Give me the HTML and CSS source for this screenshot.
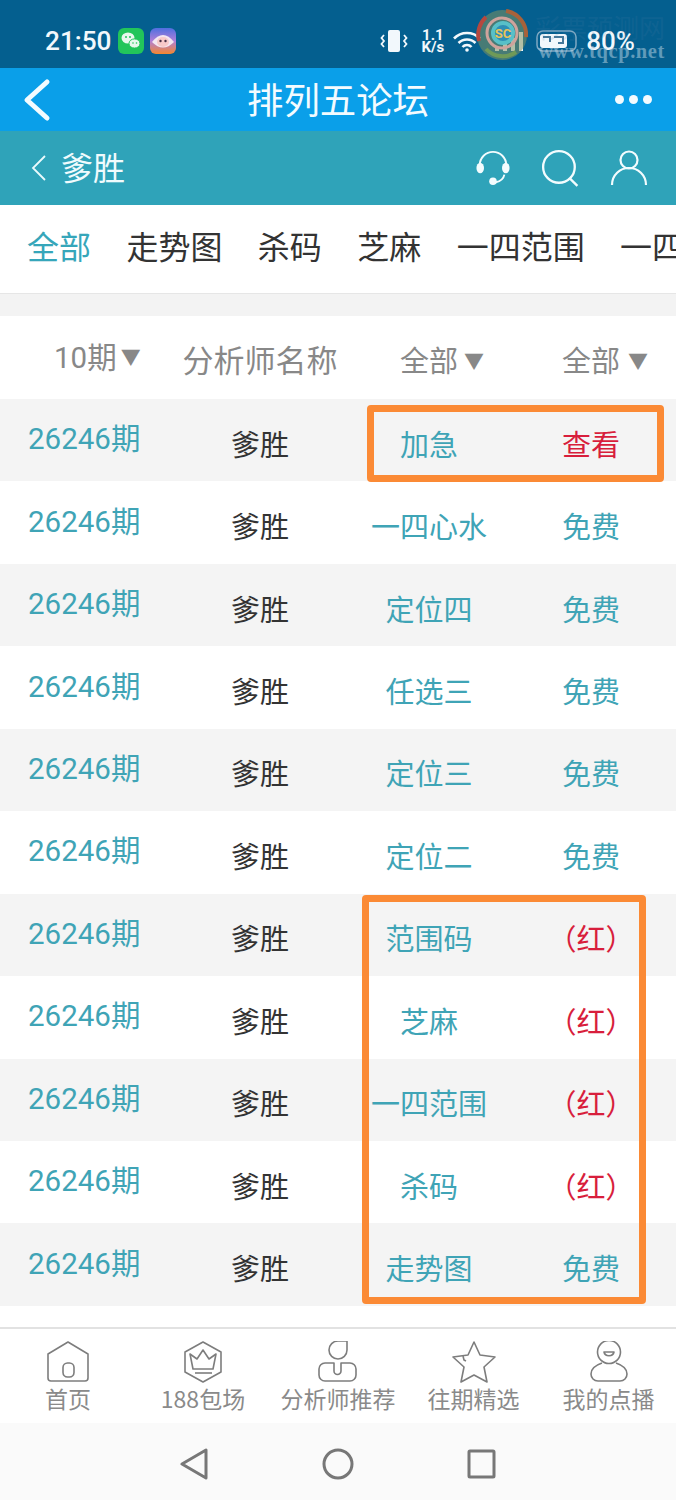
FILE: index.html
```html
<!DOCTYPE html>
<html lang="zh-CN">

<head>
  <meta charset="UTF-8">
  <meta name="viewport" content="width=device-width, initial-scale=1.0">
  <title>排列五论坛</title>
  <link rel="stylesheet" href="styles.css">
</head>

<body>
  <div class="page">
    <div class="status-bar">
      <div class="status-left">
        <span class="clock">21:50</span>
        <svg class="app-icon" viewBox="0 0 26 26">
          <rect width="26" height="26" rx="6" fill="#22c55a" />
          <ellipse cx="10" cy="10" rx="6.500" ry="5.500" fill="#e8f8ee" />
          <ellipse cx="16.500" cy="15.500" rx="5.500" ry="4.600" fill="#e8f8ee" stroke="#22c55a" />
          <circle cx="8" cy="9" r="1" fill="#22c55a" />
          <circle cx="12" cy="9" r="1" fill="#22c55a" />
          <circle cx="15" cy="15" r=".8" fill="#22c55a" />
          <circle cx="18.500" cy="15" r=".8" fill="#22c55a" />
        </svg>
        <svg class="app-icon" viewBox="0 0 26 26">
          <defs>
            <linearGradient id="appGrad" x1="0" y1="0" x2="0" y2="1">
              <stop offset="0" stop-color="#4f6fe0" />
              <stop offset=".5" stop-color="#b07fd8" />
              <stop offset="1" stop-color="#f3872f" />
            </linearGradient>
          </defs>
          <rect width="26" height="26" rx="6" fill="url(#appGrad)" />
          <path d="M2 14Q13 0 24 14Q13 25 2 14z" fill="#f4e6f0" />
          <ellipse cx="13" cy="14" rx="6" ry="5" fill="#f7c9c9" />
          <circle cx="10.500" cy="13" r="1.200" fill="#4a2f45" />
          <circle cx="15.500" cy="13" r="1.200" fill="#4a2f45" />
        </svg>
      </div>
      <div class="status-right">
        <svg class="vibrate" viewBox="0 0 30 24">
          <rect x="9" y="1" width="12" height="22" rx="2" fill="#f2f8fc" />
          <path d="M5 6L2.500 9 5 12 2.500 15 5 18M25 6l2.500 3-2.500 3 2.500 3-2.500 3" fill="none" stroke="#f2f8fc" stroke-width="1.800" />
        </svg>
        <span class="speed"><b>1.1</b><b>K/s</b></span>
        <svg class="wifi" viewBox="0 0 30 22">
          <path d="M2 8.500a18 18 0 0 1 26 0M6.500 13a12 12 0 0 1 17 0M10.500 17a6 6 0 0 1 9 0" fill="none" stroke="#f2f8fc" stroke-width="2.600" />
          <circle cx="15" cy="20" r="1.800" fill="#f2f8fc" />
        </svg>
        <svg class="signal" viewBox="0 0 32 22">
          <path d="M3 21v-4M11 21v-8M19 21v-13M27 21v-19" stroke="#f2f8fc" stroke-width="4" />
        </svg>
        <svg class="battery" viewBox="0 0 41 22">
          <rect x="1" y="1" width="39" height="20" rx="6" fill="none" stroke="#7fa9c3" stroke-width="1.500" />
          <rect x="4" y="4" width="27" height="14" rx="3" fill="#f2f8fc" />
          <path d="M7 7h7v5M18 7h9v6h-5" fill="none" stroke="#44789a" stroke-width="2" />
        </svg>
        <span class="battery-pct">80%</span>
      </div>
      <svg class="wm-logo" viewBox="0 0 52 52">
        <circle cx="26" cy="26" r="25" fill="#7f9160" opacity=".55" />
        <path d="M30 2a24 24 0 0 1 20 26" class="wm-ring wm-brown" />
        <path d="M10 8a24 24 0 0 0-7 24" class="wm-ring wm-red" />
        <path d="M10 40a23 23 0 0 0 30 3" class="wm-ring wm-green" />
        <circle cx="26" cy="24" r="15" class="wm-ring wm-pink" />
        <circle cx="27" cy="24" r="10" class="wm-ring wm-blue" />
        <text x="27" y="29" class="wm-logo-text">SC</text>
      </svg>
      <div class="wm-text">
        <span class="wm-title">彩票预测网</span>
        <span class="wm-url">www.tqcp.net</span>
      </div>
    </div>

    <div class="title-bar">
      <svg class="back-big" viewBox="0 0 30 44">
        <path d="M26 4L6 22l20 18" fill="none" stroke="#f3fbff" stroke-width="5" stroke-linecap="round" stroke-linejoin="round" />
      </svg>
      <h1 class="title">排列五论坛</h1>
      <div class="dots"><i></i><i></i><i></i></div>
    </div>

    <div class="user-bar">
      <svg class="back-small" viewBox="0 0 18 30">
        <path d="M15 3L3 15l12 12" fill="none" stroke="#eafafd" stroke-width="1.800" />
      </svg>
      <span class="user-name">爹胜</span>
      <div class="user-icons">
        <svg class="user-icon headset" viewBox="0 0 38 38">
          <path d="M5 20v-4a14 14 0 0 1 28 0v4" fill="none" stroke="#f3fcfe" stroke-width="2" />
          <path d="M31 26c-1 5-4 7-9 8" fill="none" stroke="#f3fcfe" stroke-width="2" />
          <ellipse cx="5.500" cy="19" rx="4" ry="5.500" fill="#f3fcfe" />
          <ellipse cx="32.500" cy="19" rx="4" ry="5.500" fill="#f3fcfe" />
          <circle cx="19" cy="33" r="4" fill="#f3fcfe" />
        </svg>
        <svg class="user-icon" viewBox="0 0 36 36">
          <circle cx="17" cy="17" r="15" fill="none" stroke="#f3fcfe" stroke-width="2.200" />
          <path d="M27.500 28l7 7" fill="none" stroke="#f3fcfe" stroke-width="2.200" />
        </svg>
        <svg class="user-icon" viewBox="0 0 38 38">
          <circle cx="19" cy="11" r="8.500" fill="none" stroke="#f3fcfe" stroke-width="2.200" />
          <path d="M2 36c0-10 8-17 17-17s17 7 17 17" fill="none" stroke="#f3fcfe" stroke-width="2.200" />
        </svg>
      </div>
    </div>

    <div class="tabs">
      <span class="tab tab-active">全部</span>
      <span class="tab">走势图</span>
      <span class="tab">杀码</span>
      <span class="tab">芝麻</span>
      <span class="tab">一四范围</span>
      <span class="tab">一四心水</span>
    </div>

    <div class="gap"></div>

    <div class="table">
      <div class="row row-head">
        <span class="cell-period">10期<em class="arrow arrow-period">▼</em></span>
        <span class="head-name">分析师名称</span>
        <span>全部<em class="arrow">▼</em></span>
        <span>全部<em class="arrow arrow-last">▼</em></span>
      </div>
      <div class="row odd"><span class="cell-period link">26246期</span><span class="name">爹胜</span><span class="link">加急</span><span class="red">查看</span></div>
      <div class="row"><span class="cell-period link">26246期</span><span class="name">爹胜</span><span class="link">一四心水</span><span class="link">免费</span></div>
      <div class="row odd"><span class="cell-period link">26246期</span><span class="name">爹胜</span><span class="link">定位四</span><span class="link">免费</span></div>
      <div class="row"><span class="cell-period link">26246期</span><span class="name">爹胜</span><span class="link">任选三</span><span class="link">免费</span></div>
      <div class="row odd"><span class="cell-period link">26246期</span><span class="name">爹胜</span><span class="link">定位三</span><span class="link">免费</span></div>
      <div class="row"><span class="cell-period link">26246期</span><span class="name">爹胜</span><span class="link">定位二</span><span class="link">免费</span></div>
      <div class="row odd"><span class="cell-period link">26246期</span><span class="name">爹胜</span><span class="link">范围码</span><span class="red">（红）</span></div>
      <div class="row"><span class="cell-period link">26246期</span><span class="name">爹胜</span><span class="link">芝麻</span><span class="red">（红）</span></div>
      <div class="row odd"><span class="cell-period link">26246期</span><span class="name">爹胜</span><span class="link">一四范围</span><span class="red">（红）</span></div>
      <div class="row"><span class="cell-period link">26246期</span><span class="name">爹胜</span><span class="link">杀码</span><span class="red">（红）</span></div>
      <div class="row odd"><span class="cell-period link">26246期</span><span class="name">爹胜</span><span class="link">走势图</span><span class="link">免费</span></div>
    </div>

    <div class="mark mark-top"></div>
    <div class="mark mark-bottom"></div>

    <div class="spacer"></div>

    <div class="bottom-tabs">
      <div class="bottom-tab">
        <svg class="bottom-icon" viewBox="0 0 44 42">
          <path d="M2 13L22 1l20 12v24a3 3 0 0 1-3 3H5a3 3 0 0 1-3-3z" class="line" />
          <rect x="17" y="22" width="11" height="14" rx="4.500" class="line" />
        </svg>
        <span>首页</span>
      </div>
      <div class="bottom-tab">
        <svg class="bottom-icon" viewBox="0 0 44 42">
          <path d="M22 1l18 10v20L22 41 4 31V11z" class="line" />
          <path d="M9 13l7 5 6-9 6 9 7-5-3 15H12z" class="line" />
          <path d="M14 32h17" class="line" />
        </svg>
        <span>188包场</span>
      </div>
      <div class="bottom-tab">
        <svg class="bottom-icon" viewBox="0 0 44 42">
          <path d="M13 9a9 9 0 0 1 9-9h9v9a9 9 0 0 1-9 9 9 9 0 0 1-9-9z" class="line" />
          <path d="M18 22H9a6 6 0 0 0-6 6v6a6 6 0 0 0 6 6h25a6 6 0 0 0 6-6v-6a6 6 0 0 0-6-6h-9v8a3.500 3.500 0 0 1-7 0z" class="line" />
        </svg>
        <span>分析师推荐</span>
      </div>
      <div class="bottom-tab">
        <svg class="bottom-icon" viewBox="0 0 44 42">
          <path d="M22 1l6 13 15 2-11 10 3 15-13-7-13 7 3-15L1 16l15-2z" class="line" />
          <path d="M11 15l1 4 2 1" class="line" />
        </svg>
        <span>往期精选</span>
      </div>
      <div class="bottom-tab">
        <svg class="bottom-icon" viewBox="0 0 44 42">
          <circle cx="22" cy="11" r="11.500" class="line" />
          <path d="M17 11h10c-1 5-9 5-10 0z" class="line" />
          <path d="M15 22c-6 2-11 6-11 11 0 4 3 7 7 7h22c4 0 7-3 7-7 0-5-5-9-11-11" class="line" />
        </svg>
        <span>我的点播</span>
      </div>
    </div>

    <div class="nav-bar">
      <svg class="nav-icon" viewBox="0 0 30 32">
        <path d="M2 16L26 2v28z" class="nav-line" />
      </svg>
      <svg class="nav-icon" viewBox="0 0 32 32">
        <circle cx="16" cy="16" r="14" class="nav-line" />
      </svg>
      <svg class="nav-icon" viewBox="0 0 30 32">
        <rect x="3" y="3" width="25" height="26" rx="1" class="nav-line" />
      </svg>
    </div>
  </div>
</body>

</html>
```
FILE: styles.css
```css
* {
  box-sizing: border-box;
}

body {
  margin: 0;
  padding: 0;
  background: #fff;
  font-family: "Noto Sans CJK SC", Roboto, sans-serif;
}

.page {
  position: relative;
  width: 676px;
  height: 1500px;
  overflow: hidden;
  display: flex;
  flex-direction: column;
}

/* status bar */
.status-bar {
  position: relative;
  height: 68px;
  flex: none;
  background: #045f8f;
  display: flex;
  align-items: center;
  justify-content: space-between;
  padding: 14px 41px 0 45px;
  color: #f2f8fc;
}

.status-left {
  display: flex;
  align-items: center;
  gap: 6px;
}

.clock {
  font-family: Roboto, sans-serif;
  font-size: 26.2px;
  font-weight: 500;
  margin-right: 1px;
}

.app-icon {
  width: 26px;
  height: 26px;
}

.status-right {
  display: flex;
  align-items: center;
}

.vibrate {
  width: 30px;
  height: 24px;
}

.speed {
  display: flex;
  flex-direction: column;
  align-items: center;
  font-family: Roboto, sans-serif;
  font-size: 15px;
  line-height: 12px;
  margin-left: 12px;
}

.wifi {
  width: 30px;
  height: 22px;
  margin-left: 8px;
}

.signal {
  width: 32px;
  height: 22px;
  margin-left: 12px;
}

.battery {
  width: 41px;
  height: 22px;
  margin-left: 10px;
}

.battery-pct {
  font-family: Roboto, sans-serif;
  font-size: 26px;
  font-weight: 500;
  margin-left: 9px;
}

.wm-logo {
  position: absolute;
  left: 476px;
  top: 9px;
  width: 52px;
  height: 52px;
}

.wm-ring {
  fill: none;
  stroke-width: 4;
}

.wm-brown {
  stroke: #a8623a;
}

.wm-red {
  stroke: #b5483f;
}

.wm-green {
  stroke: #6f9a58;
}

.wm-pink {
  stroke: #cfa39c;
  stroke-width: 3;
}

.wm-blue {
  fill: #2f8fb5;
  stroke: #58c0c8;
}

.wm-logo-text {
  font-family: Roboto, sans-serif;
  font-size: 13px;
  font-weight: 700;
  fill: #e7c35a;
  text-anchor: middle;
}

.wm-text {
  position: absolute;
  right: 11px;
  top: 12px;
  display: flex;
  flex-direction: column;
  align-items: flex-end;
}

.wm-title {
  font-size: 26px;
  line-height: 30px;
  color: rgba(70, 125, 165, 0.18);
}

.wm-url {
  font-family: "Liberation Serif", serif;
  font-size: 20.5px;
  font-weight: 700;
  line-height: 18px;
  letter-spacing: 0.6px;
  color: rgba(190, 215, 230, 0.5);
}

/* title bar */
.title-bar {
  position: relative;
  height: 63px;
  flex: none;
  background: #0a9fe9;
  display: flex;
  align-items: center;
  justify-content: center;
}

.back-big {
  position: absolute;
  left: 21px;
  top: 10px;
  width: 30px;
  height: 44px;
}

.title {
  margin: 0 0 4px;
  font-size: 36.4px;
  font-weight: 400;
  color: #f3fbff;
}

.dots {
  position: absolute;
  right: 24px;
  top: 27px;
  display: flex;
  gap: 5px;
}

.dots i {
  width: 9px;
  height: 9px;
  border-radius: 50%;
  background: #f3fbff;
}

/* user bar */
.user-bar {
  height: 74px;
  flex: none;
  background: #2fa3b9;
  display: flex;
  align-items: center;
  padding: 0 28px 0 30px;
  color: #f0fbfd;
}

.back-small {
  width: 18px;
  height: 30px;
}

.user-name {
  margin: 0 0 4px 13px;
  font-size: 32px;
}

.user-icons {
  margin-left: auto;
  display: flex;
  align-items: center;
  gap: 31px;
}

.user-icon {
  width: 38px;
  height: 38px;
}

.headset {
  width: 36px;
  height: 36px;
  margin-right: -1px;
}

/* tabs */
.tabs {
  height: 88px;
  flex: none;
  display: flex;
  align-items: center;
  gap: 35.4px;
  padding: 0 0 8px 27px;
  overflow: hidden;
  white-space: nowrap;
  font-size: 32px;
  color: #333;
  background: #fff;
}

.tab {
  flex: none;
}

.tab-active {
  color: #36a6ba;
}

.gap {
  height: 23px;
  flex: none;
  background: #f3f3f3;
  border-top: 1px solid #e6e6e6;
}

/* table */
.table {
  flex: none;
  display: flex;
  flex-direction: column;
}

.row {
  height: 82.45px;
  padding-top: 5px;
  display: grid;
  grid-template-columns: 168px 184px 154px 170px;
  align-items: center;
  text-align: center;
  font-size: 29px;
  white-space: nowrap;
  background: #fff;
}

.row-head {
  height: 83px;
  padding-top: 2px;
  color: #888;
}

.row-head .cell-period {
  top: -4px;
  padding-left: 54px;
}

.head-name {
  font-size: 31px;
}

.odd {
  background: #f4f4f4;
}

.cell-period {
  position: relative;
  top: -6.5px;
  font-family: Roboto, "Noto Sans CJK SC", sans-serif;
  font-size: 29.5px;
  text-align: left;
  padding-left: 28px;
}

.arrow {
  display: inline-block;
  width: 19px;
  margin: 0 -25px 0 6px;
  font-style: normal;
  font-size: 20px;
  vertical-align: 3px;
}

.arrow-period {
  margin-left: 4px;
}

.arrow-last {
  margin: 0 -27px 0 8px;
}

.link {
  color: #3fa4b6;
}

.name {
  color: #333;
}

.red {
  color: #d81e3c;
}

/* orange annotation boxes */
.mark {
  position: absolute;
  border: 7px solid #fb8a35;
  border-radius: 4px;
}

.mark-top {
  left: 367px;
  top: 405px;
  width: 297px;
  height: 77px;
}

.mark-bottom {
  left: 362px;
  top: 895px;
  width: 284px;
  height: 409px;
}

.spacer {
  height: 21px;
  flex: none;
  background: #fff;
}

/* bottom tabs */
.bottom-tabs {
  height: 96px;
  flex: none;
  display: grid;
  grid-template-columns: 136px 134px 136px 135px 135px;
  border-top: 2px solid #e2e2e2;
  background: #fff;
  padding-top: 12px;
}

.bottom-tab {
  display: flex;
  flex-direction: column;
  align-items: center;
  font-size: 23px;
  line-height: 30px;
  color: #8a8a8a;
  white-space: nowrap;
}

.bottom-icon {
  width: 44px;
  height: 42px;
}

.line {
  fill: none;
  stroke: #7d7d7d;
  stroke-width: 1.6;
  stroke-linejoin: round;
}

/* android nav */
.nav-bar {
  flex: 1;
  background: #fafafa;
  display: flex;
  align-items: center;
  justify-content: space-between;
  padding: 5px 180px 0;
}

.nav-icon {
  height: 32px;
}

.nav-icon:nth-child(odd) {
  width: 30px;
}

.nav-icon:nth-child(2) {
  width: 32px;
}

.nav-line {
  fill: none;
  stroke: #777;
  stroke-width: 3;
  stroke-linejoin: round;
}
```
